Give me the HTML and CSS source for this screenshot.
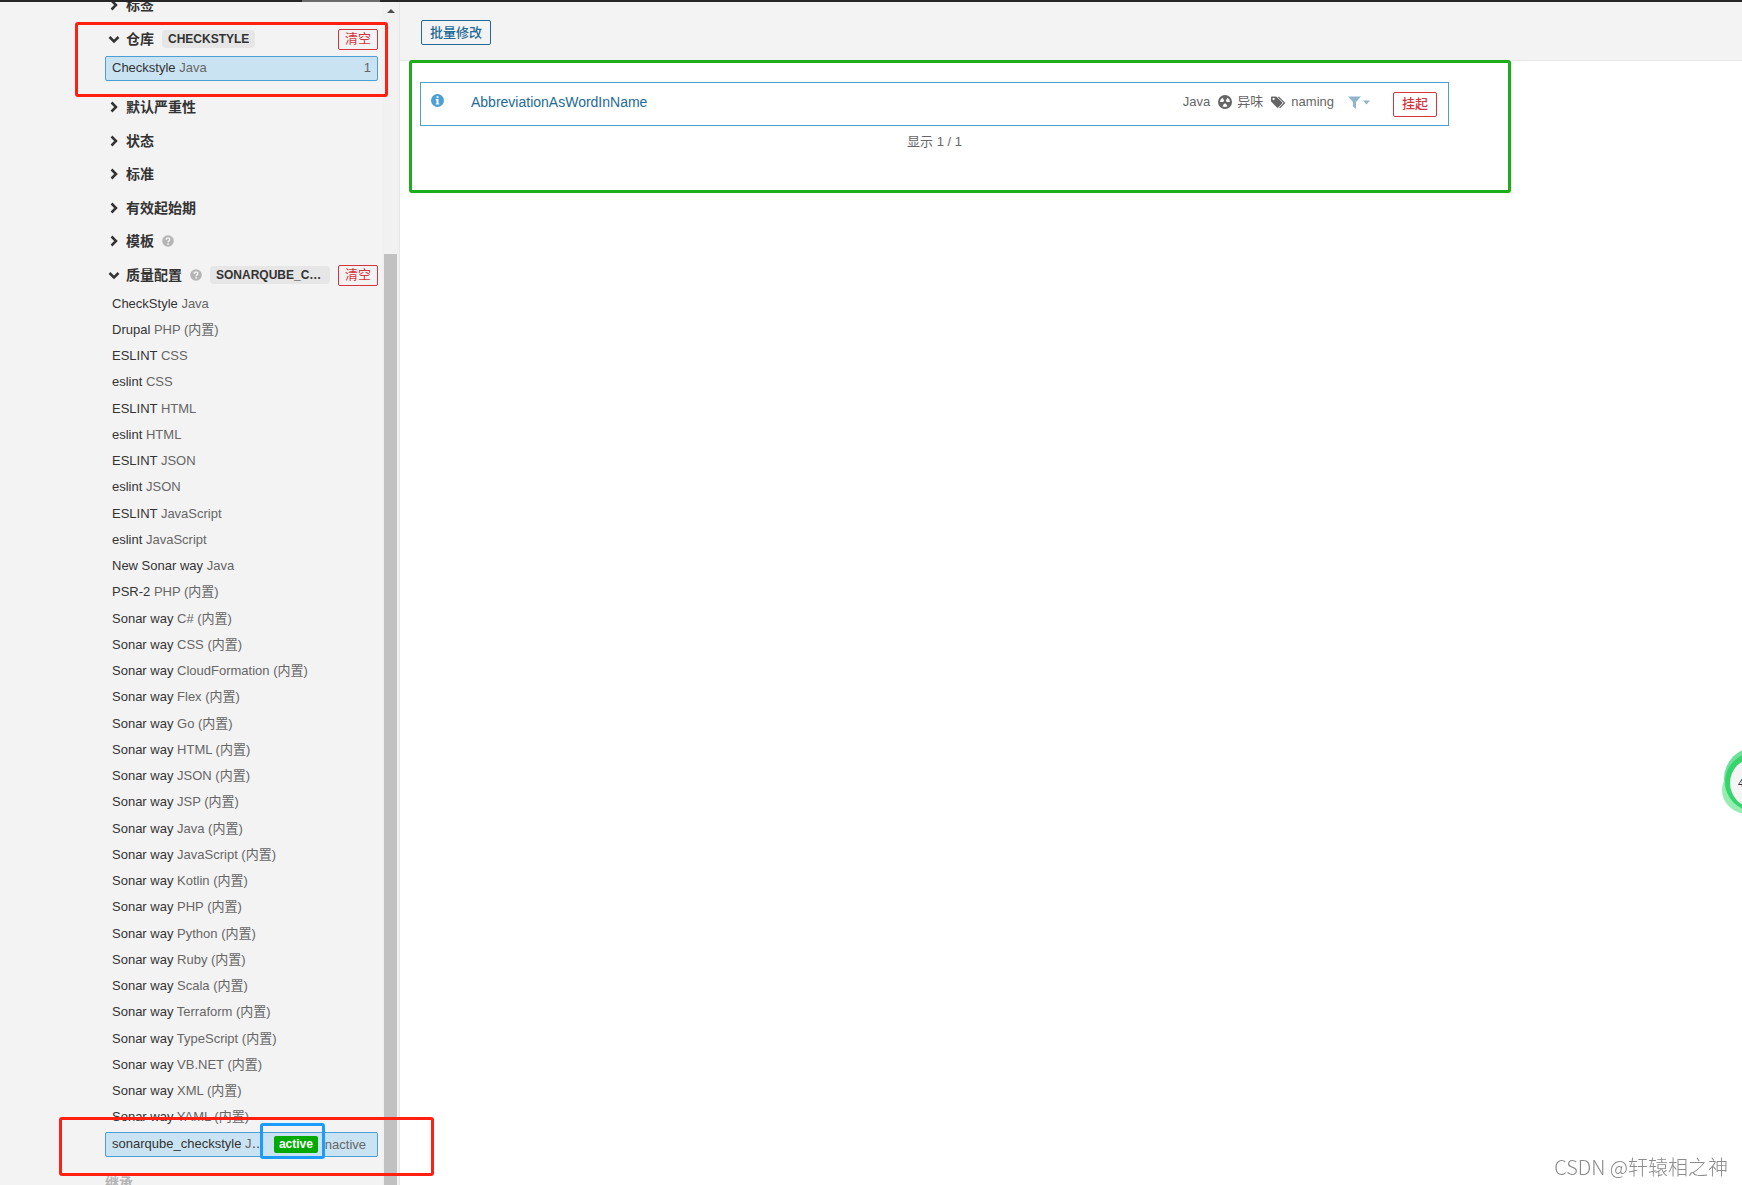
FILE: index.html
```
<!DOCTYPE html>
<html lang="zh-CN">

<head>
    <meta charset="UTF-8">
    <meta name="viewport" content="width=device-width, initial-scale=1.0">
    <title>代码规则</title>
    <link rel="stylesheet" href="styles.css">
</head>

<body>
<!-- shared icons -->
<svg class="icon-defs" width="0" height="0">
    <symbol id="icon-right" viewBox="0 0 12 12">
        <path d="M3.5 1.5L8 6l-4.500 4.500" fill="none" stroke="#333" stroke-width="2.500"/>
    </symbol>
    <symbol id="icon-down" viewBox="0 0 12 12">
        <path d="M1.500 4L6 8.500 10.500 4" fill="none" stroke="#333" stroke-width="2.500"/>
    </symbol>
    <symbol id="icon-help" viewBox="0 0 12 12">
        <circle cx="6" cy="6" r="5.800" fill="#b4b4b4"/>
        <path d="M4.200 4.800C4.200 2.300 7.900 2.500 7.800 4.700 7.700 5.900 6.100 5.900 6.100 7.300" fill="none" stroke="#f3f3f3" stroke-width="1.500"/>
        <rect x="5.300" y="8.200" width="1.600" height="1.500" fill="#f3f3f3"/>
    </symbol>
</svg>

<div class="topbar"><div class="topbar-active"></div></div>

<div class="layout">
    <aside class="sidebar">
        <div class="facets">
            <div class="facet-header">
                <svg class="chevron"><use href="#icon-right"/></svg>
                <a href="#">标签</a>
            </div>

            <div class="facet-header">
                <svg class="chevron"><use href="#icon-down"/></svg>
                <a href="#">仓库</a>
                <span class="facet-value">CHECKSTYLE</span>
                <button class="btn btn-red btn-small" type="button">清空</button>
            </div>
            <ul class="facet-list">
                <li class="selected"><a href="#">Checkstyle <span>Java</span></a><span class="stat">1</span></li>
            </ul>

            <div class="facet-header">
                <svg class="chevron"><use href="#icon-right"/></svg>
                <a href="#">默认严重性</a>
            </div>
            <div class="facet-header compact">
                <svg class="chevron"><use href="#icon-right"/></svg>
                <a href="#">状态</a>
            </div>
            <div class="facet-header">
                <svg class="chevron"><use href="#icon-right"/></svg>
                <a href="#">标准</a>
            </div>
            <div class="facet-header compact">
                <svg class="chevron"><use href="#icon-right"/></svg>
                <a href="#">有效起始期</a>
            </div>
            <div class="facet-header">
                <svg class="chevron"><use href="#icon-right"/></svg>
                <a href="#">模板</a>
                <svg class="help"><use href="#icon-help"/></svg>
            </div>

            <div class="facet-header">
                <svg class="chevron"><use href="#icon-down"/></svg>
                <a href="#">质量配置</a>
                <svg class="help"><use href="#icon-help"/></svg>
                <span class="facet-value">SONARQUBE_CHECKSTYLE</span>
                <button class="btn btn-red btn-small" type="button">清空</button>
            </div>
            <ul class="facet-list">
                <li><a href="#">CheckStyle <span>Java</span></a></li>
                <li><a href="#">Drupal <span>PHP (内置)</span></a></li>
                <li><a href="#">ESLINT <span>CSS</span></a></li>
                <li><a href="#">eslint <span>CSS</span></a></li>
                <li><a href="#">ESLINT <span>HTML</span></a></li>
                <li><a href="#">eslint <span>HTML</span></a></li>
                <li><a href="#">ESLINT <span>JSON</span></a></li>
                <li><a href="#">eslint <span>JSON</span></a></li>
                <li><a href="#">ESLINT <span>JavaScript</span></a></li>
                <li><a href="#">eslint <span>JavaScript</span></a></li>
                <li><a href="#">New Sonar way <span>Java</span></a></li>
                <li><a href="#">PSR-2 <span>PHP (内置)</span></a></li>
                <li><a href="#">Sonar way <span>C# (内置)</span></a></li>
                <li><a href="#">Sonar way <span>CSS (内置)</span></a></li>
                <li><a href="#">Sonar way <span>CloudFormation (内置)</span></a></li>
                <li><a href="#">Sonar way <span>Flex (内置)</span></a></li>
                <li><a href="#">Sonar way <span>Go (内置)</span></a></li>
                <li><a href="#">Sonar way <span>HTML (内置)</span></a></li>
                <li><a href="#">Sonar way <span>JSON (内置)</span></a></li>
                <li><a href="#">Sonar way <span>JSP (内置)</span></a></li>
                <li><a href="#">Sonar way <span>Java (内置)</span></a></li>
                <li><a href="#">Sonar way <span>JavaScript (内置)</span></a></li>
                <li><a href="#">Sonar way <span>Kotlin (内置)</span></a></li>
                <li><a href="#">Sonar way <span>PHP (内置)</span></a></li>
                <li><a href="#">Sonar way <span>Python (内置)</span></a></li>
                <li><a href="#">Sonar way <span>Ruby (内置)</span></a></li>
                <li><a href="#">Sonar way <span>Scala (内置)</span></a></li>
                <li><a href="#">Sonar way <span>Terraform (内置)</span></a></li>
                <li><a href="#">Sonar way <span>TypeScript (内置)</span></a></li>
                <li><a href="#">Sonar way <span>VB.NET (内置)</span></a></li>
                <li><a href="#">Sonar way <span>XML (内置)</span></a></li>
                <li><a href="#">Sonar way <span>YAML (内置)</span></a></li>
                <li class="selected">
                    <a href="#">sonarqube_checkstyle <span>Java</span></a>
                    <span class="activation"><span class="active">active</span><span>inactive</span></span>
                </li>
            </ul>

            <div class="facet-header disabled">继承</div>
        </div>

        <div class="scrollbar">
            <svg class="scroll-up" viewBox="0 0 8 4"><path d="M4 0l4 4H0z" fill="#505050"/></svg>
            <div class="scroll-thumb"></div>
        </div>

        <div class="mark mark-repo"></div>
        <div class="mark mark-profile"></div>
        <div class="mark mark-active"></div>
    </aside>

    <main class="main">
        <header class="toolbar">
            <button class="btn btn-blue" type="button">批量修改</button>
        </header>

        <section class="results">
            <article class="rule">
                <svg class="rule-info" viewBox="0 0 13 13">
                    <circle cx="6.500" cy="6.500" r="6.500" fill="#4b9fd5"/>
                    <path d="M5.500 2.200h2v1.700h-2zM4.700 5h2.800v4.400h.8v1.200H4.700V9.400h.8V6.200h-.8z" fill="#fff"/>
                </svg>
                <a class="rule-name" href="#">AbbreviationAsWordInName</a>
                <div class="rule-meta">
                    <span>Java</span>
                    <span class="meta-item">
                        <svg width="14" height="14" viewBox="0 0 14 14">
                            <circle cx="7" cy="7" r="7" fill="#666"/>
                            <path d="M6.200 5.600L4.500 2.700A5 5 0 0 0 2 7h3.400a1.600 1.600 0 0 1 .8-1.400zM7.800 5.600l1.700-2.900A5 5 0 0 1 12 7H8.600a1.600 1.600 0 0 0-.8-1.400zM6.200 8.400l-1.700 2.900a5 5 0 0 0 5 0L7.800 8.400a1.600 1.600 0 0 1-1.600 0z" fill="#fff"/>
                        </svg>
                        <span>异味</span>
                    </span>
                    <span class="meta-item">
                        <svg width="15" height="13" viewBox="0 0 15 13">
                            <path d="M0 1.300Q0 .4 1 .4h3.600q.7 0 1.200.5l5.300 5.300q.7.700 0 1.400l-3.800 3.900q-.7.700-1.400 0L.6 6.100Q0 5.500 0 4.900zM2.600 1.800a1.100 1.100 0 1 0 .01 0z" fill="#666" fill-rule="evenodd"/>
                            <path d="M7.400.9l6 6-4.700 5" fill="none" stroke="#666" stroke-width="1.300"/>
                        </svg>
                        <span>naming</span>
                    </span>
                    <button class="filter" type="button" aria-label="filter">
                        <svg width="23" height="13" viewBox="0 0 23 13">
                            <path d="M0 .5h13L8 6v7L5 10.500V6zM15 4.500h7l-3.500 4z" fill="#91b5cb"/>
                        </svg>
                    </button>
                </div>
                <button class="btn btn-red" type="button">挂起</button>
            </article>
            <p class="results-count">显示 1 / 1</p>
            <div class="mark mark-results"></div>
        </section>
    </main>
</div>

<svg class="float-ball" viewBox="0 0 20 68">
    <circle cx="34" cy="31" r="32" fill="#6fe09a"/>
    <ellipse cx="26" cy="42" rx="26" ry="24" fill="#7be89c" opacity=".8"/>
    <circle cx="32" cy="34" r="29" fill="#35d46c"/>
    <circle cx="33" cy="35" r="25" fill="#f5f5f5"/>
    <text x="16" y="39" font-size="11" fill="#333">4</text>
</svg>
<div class="watermark">CSDN @轩辕相之神</div>
</body>

</html>
```
FILE: styles.css
```
* {
    box-sizing: border-box;
}

body {
    margin: 0;
    height: 100vh;
    display: flex;
    flex-direction: column;
    overflow: hidden;
    background-color: #fff;
    color: #333;
    font-family: "Liberation Sans", "Noto Sans CJK SC", sans-serif;
    font-size: 13px;
    line-height: 18px;
}

a {
    color: inherit;
    text-decoration: none;
}

.icon-defs {
    position: absolute;
}

/* top bar */
.topbar {
    position: relative;
    z-index: 2;
    flex: none;
    height: 2px;
    padding-left: 302px;
    background-color: #262626;
}

.topbar-active {
    width: 78px;
    height: 2px;
    background-color: #6b6b6b;
}

.layout {
    display: flex;
    flex: 1;
    min-height: 0;
}

/* sidebar */
.sidebar {
    position: relative;
    display: flex;
    flex: none;
    width: 400px;
    padding-left: 105px;
    background-color: #f3f3f3;
    border-right: 1px solid #e6e6e6;
}

/* the list is scrolled up under the top bar */
.facets {
    flex: 1;
    min-width: 0;
    margin-top: -14px;
    margin-right: 4px;
}

.facet-header {
    display: flex;
    align-items: center;
    gap: 8px;
    height: 34px;
    padding-left: 3px;
    font-size: 14px;
    font-weight: bold;
    white-space: nowrap;
}

.facet-header.compact {
    height: 33px;
}

.facet-header.disabled {
    padding-left: 0;
    color: #b4b4b4;
}

.chevron {
    flex: none;
    width: 12px;
    height: 12px;
    margin-right: -2px;
}

.help {
    flex: none;
    width: 12px;
    height: 12px;
}

.facet-value {
    overflow: hidden;
    text-overflow: ellipsis;
    padding: 0 6px;
    background-color: #e6e6e6;
    border-radius: 4px;
    font-size: 12px;
}

.facet-list {
    margin: 0 0 9px;
    padding: 0;
    list-style: none;
}

.facet-list li {
    display: flex;
    height: 25px;
    padding: 0 6px;
    border: 1px solid transparent;
    border-radius: 2px;
    line-height: 22px;
    white-space: nowrap;
}

.facet-list li + li {
    margin-top: 1px;
}

.facet-list li + li:nth-child(4n+1) {
    margin-top: 2px;
}

.facet-list li.selected {
    background-color: #cae3f2;
    border-color: #4b9fd5;
}

.facet-list a {
    flex: 1;
    overflow: hidden;
    text-overflow: ellipsis;
}

.facet-list a span,
.stat,
.activation {
    color: #666;
}

.activation {
    display: flex;
    align-items: center;
    gap: 4px;
    margin-left: 8px;
    padding-right: 5px;
}

.active {
    padding: 0 5px;
    background-color: #0a0;
    border-radius: 2px;
    color: #fff;
    font-size: 12px;
    font-weight: bold;
    line-height: 17px;
}

.scrollbar {
    display: flex;
    flex-direction: column;
    align-items: center;
    width: 17px;
    padding-top: 7px;
    background-color: #f1f1f1;
}

.scroll-up {
    flex: none;
    width: 8px;
    height: 4px;
}

.scroll-thumb {
    flex: 1;
    width: 13px;
    margin-top: 241px;
    background-color: #c1c1c1;
}

/* buttons */
.btn {
    flex: none;
    height: 25px;
    padding: 0 8px;
    background-color: transparent;
    border: 1px solid;
    border-radius: 2px;
    font-family: inherit;
    font-size: 13px;
    font-weight: 500;
    line-height: 20px;
    cursor: pointer;
}

.btn-small {
    height: 21px;
    margin-left: auto;
    padding: 0 6px;
    font-weight: normal;
    line-height: 18px;
}

.btn-red {
    color: #d4333f;
}

.btn-blue {
    color: #236a97;
}

/* main */
.main {
    flex: 1;
    min-width: 0;
}

.toolbar {
    height: 59px;
    padding: 18px 21px;
    background-color: #f3f3f3;
    border-bottom: 1px solid #e6e6e6;
}

.results {
    position: relative;
    padding: 21px 293px 0 20px;
}

.rule {
    display: flex;
    align-items: center;
    height: 44px;
    padding: 0 11px 0 10px;
    border: 1px solid #4b9fd5;
}

.rule-info {
    width: 13px;
    height: 13px;
    margin-bottom: 7px;
}

.rule-name {
    flex: 1;
    margin-left: 27px;
    padding-bottom: 4px;
    color: #236a97;
    font-size: 14px;
}

.rule-meta {
    display: flex;
    align-items: center;
    gap: 8px;
    margin-right: 22px;
    padding-bottom: 4px;
    color: #666;
}

.meta-item {
    display: flex;
    align-items: center;
    gap: 5px;
}

.filter {
    display: flex;
    margin-left: 6px;
    padding: 0;
    background: none;
    border: none;
    cursor: pointer;
}

.results-count {
    margin: 7px 0 0;
    color: #666;
    text-align: center;
}

/* highlight frames */
.mark {
    position: absolute;
    border: 3px solid #ff2012;
    border-radius: 3px;
    pointer-events: none;
}

.mark-repo {
    top: 20px;
    left: 75px;
    width: 313px;
    height: 75px;
}

.mark-profile {
    top: 1115px;
    left: 59px;
    width: 375px;
    height: 59px;
}

.mark-active {
    top: 1121px;
    left: 260px;
    width: 65px;
    height: 36px;
    border-color: #1c9cff;
}

.mark-results {
    top: -1px;
    left: 9px;
    right: 231px;
    height: 133px;
    border-color: #1cac1c;
}

/* floating items */
.float-ball {
    position: fixed;
    top: 748px;
    right: 0;
    width: 20px;
    height: 68px;
}

.watermark {
    position: fixed;
    right: 14px;
    bottom: 4px;
    color: #8c8c8c;
    font-family: "Noto Sans CJK SC", sans-serif;
    font-size: 20px;
    font-weight: 300;
    line-height: 28px;
}
```
